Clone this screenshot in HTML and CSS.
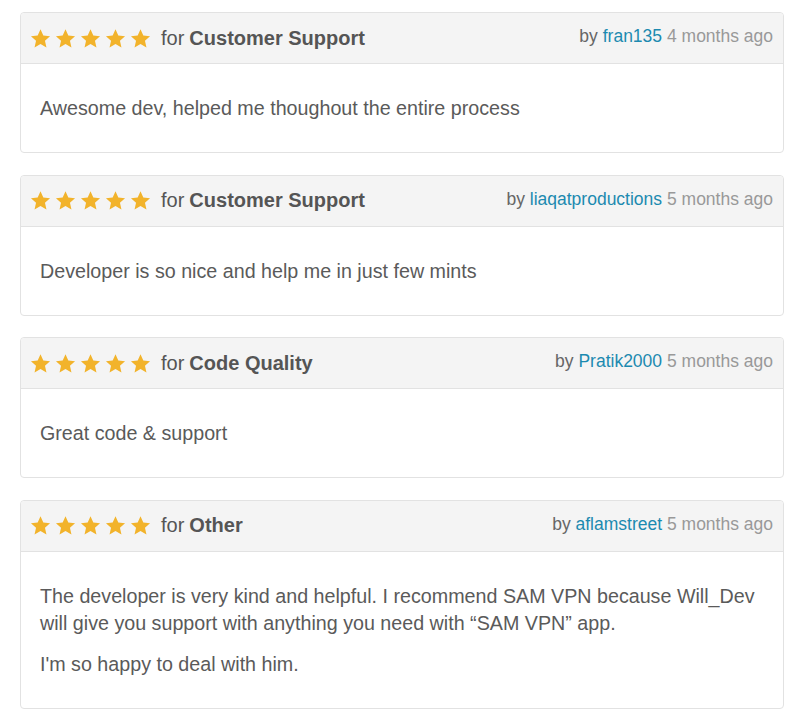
FILE: index.html
```html
<!DOCTYPE html>
<html lang="en">
<head>
  <meta charset="UTF-8">
  <title>Reviews</title>
  <link rel="stylesheet" href="styles.css">
</head>
<body>
  <svg width="0" height="0" class="defs">
    <symbol id="star" viewBox="0 0 24 24">
      <path d="M12 1.5l3.2 7.1 7.7.8-5.8 5.2 1.7 7.6L12 18.3l-6.8 3.9 1.7-7.6-5.8-5.2 7.7-.8z"/>
    </symbol>
  </svg>

  <div class="reviews">

    <div class="review">
      <div class="review-head">
        <div class="rating">
          <span class="stars">
            <svg><use href="#star"/></svg><svg><use href="#star"/></svg><svg><use href="#star"/></svg><svg><use href="#star"/></svg><svg><use href="#star"/></svg>
          </span>
          for <b>Customer Support</b>
        </div>
        <div class="meta">by <a href="#">fran135</a> <span class="ago">4 months ago</span></div>
      </div>
      <div class="review-body">
        <p>Awesome dev, helped me thoughout the entire process</p>
      </div>
    </div>

    <div class="review">
      <div class="review-head">
        <div class="rating">
          <span class="stars">
            <svg><use href="#star"/></svg><svg><use href="#star"/></svg><svg><use href="#star"/></svg><svg><use href="#star"/></svg><svg><use href="#star"/></svg>
          </span>
          for <b>Customer Support</b>
        </div>
        <div class="meta">by <a href="#">liaqatproductions</a> <span class="ago">5 months ago</span></div>
      </div>
      <div class="review-body">
        <p>Developer is so nice and help me in just few mints</p>
      </div>
    </div>

    <div class="review">
      <div class="review-head">
        <div class="rating">
          <span class="stars">
            <svg><use href="#star"/></svg><svg><use href="#star"/></svg><svg><use href="#star"/></svg><svg><use href="#star"/></svg><svg><use href="#star"/></svg>
          </span>
          for <b>Code Quality</b>
        </div>
        <div class="meta">by <a href="#">Pratik2000</a> <span class="ago">5 months ago</span></div>
      </div>
      <div class="review-body">
        <p>Great code &amp; support</p>
      </div>
    </div>

    <div class="review">
      <div class="review-head">
        <div class="rating">
          <span class="stars">
            <svg><use href="#star"/></svg><svg><use href="#star"/></svg><svg><use href="#star"/></svg><svg><use href="#star"/></svg><svg><use href="#star"/></svg>
          </span>
          for <b>Other</b>
        </div>
        <div class="meta">by <a href="#">aflamstreet</a> <span class="ago">5 months ago</span></div>
      </div>
      <div class="review-body">
        <p>The developer is very kind and helpful. I recommend SAM VPN because Will_Dev will give you support with anything you need with “SAM VPN” app.</p>
        <p>I'm so happy to deal with him.</p>
      </div>
    </div>

  </div>
</body>
</html>
```

FILE: styles.css
```css
body {
  margin: 0;
  background: #fff;
  font-family: "Liberation Sans", Arial, sans-serif;
  color: #555;
}

.defs {
  position: absolute;
}

.reviews {
  padding: 12px 15px 0 20px;
}

.review {
  border: 1px solid #e2e2e2;
  border-radius: 4px;
  margin-bottom: 21.5px;
}

.review-head {
  display: flex;
  justify-content: space-between;
  align-items: center;
  padding: 10px 10px 10px 9px;
  height: 30px;
  background: #f4f4f4;
  border-bottom: 1px solid #e2e2e2;
  border-radius: 4px 4px 0 0;
}

.rating {
  font-size: 20px;
  display: flex;
  align-items: center;
  gap: 5px;
}

.rating b {
  color: #555;
}

.stars {
  display: flex;
  gap: 4px;
  margin-right: 5px;
}

.stars svg {
  width: 21px;
  height: 21px;
  fill: #f2b32b;
}

.meta {
  font-size: 17.5px;
  color: #666;
  margin-top: -3px;
}

.meta a {
  color: #1c8ab0;
  text-decoration: none;
}

.ago {
  color: #999;
}

.review-body {
  padding: 31px 19px 30px 19px;
  font-size: 19.7px;
  line-height: 27px;
  color: #5a5a5a;
}

.review-body p {
  margin: 0 0 14px;
}

.review-body p:last-child {
  margin-bottom: 0;
}
```
